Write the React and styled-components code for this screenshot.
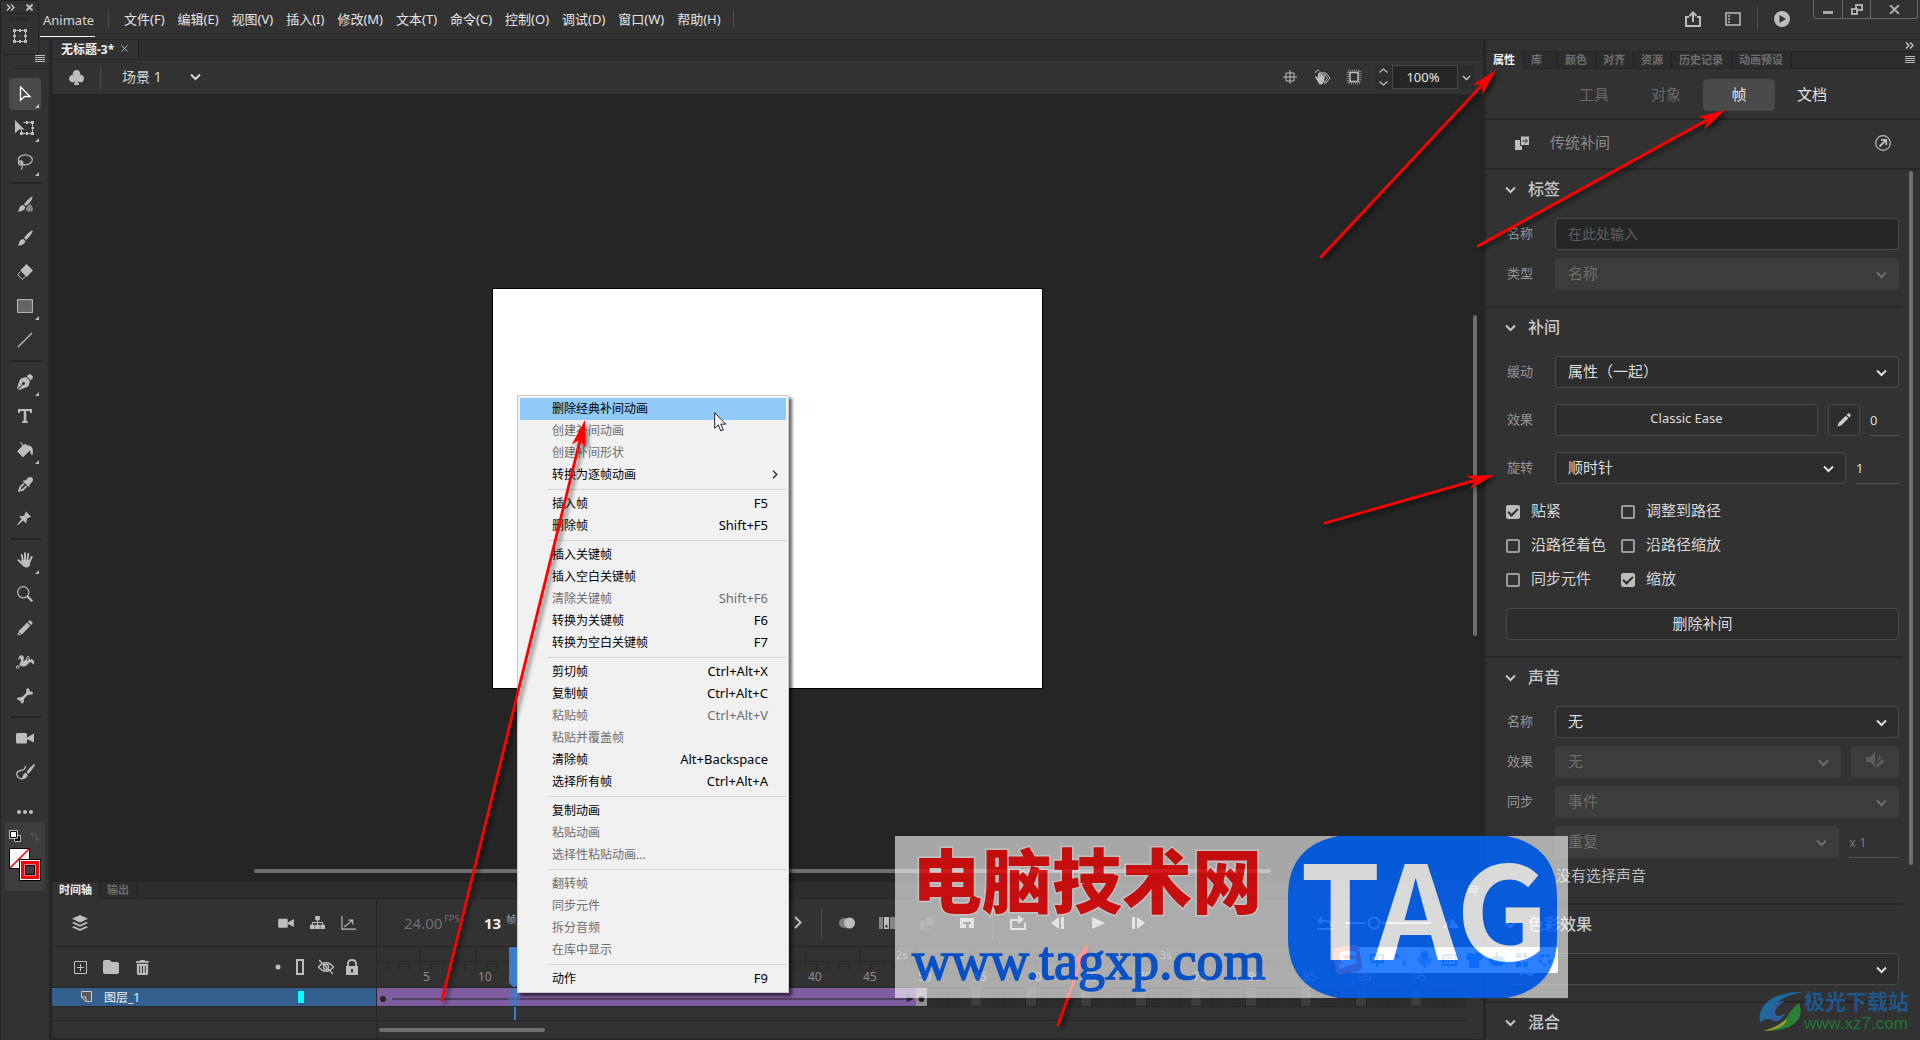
import React from "react"
import styled, { createGlobalStyle, css } from "styled-components"
import { FaPenNib, FaBone, FaEyeDropper, FaFolder, FaTrashCan } from "react-icons/fa6"
import { BsSuitClubFill } from "react-icons/bs"

/*-----------STYLES ------------*/

const GlobalStyle = createGlobalStyle`
  * {
    box-sizing: border-box;
  }
  body {
    margin: 0;
    background: #262626;
    color: #d6d6d6;
    font-family: "Noto Sans", "Noto Sans CJK SC", sans-serif;
    font-size: 12px;
    overflow: hidden;
  }
  button, input, select {
    font-family: inherit;
    font-size: inherit;
    color: inherit;
    margin: 0;
    padding: 0;
    border: 0;
    background: none;
  }
  svg {
    display: block;
  }
`

const Page = styled.div`
  position: relative;
  display: grid;
  grid-template-columns: 52px minmax(0, 1fr) 434px;
  grid-template-rows: 40px minmax(0, 1fr);
  column-gap: 0;
  height: 100vh;
  background: #262626;
`

const TitleBar = styled.header`
  grid-column: 1 / -1;
  display: flex;
  align-items: flex-start;
  background: #323232;
  border-bottom: 1px solid #262626;
`

const AppName = styled.div`
  margin-left: 40px;
  width: 55px;
  height: 37px;
  padding-left: 3px;
  line-height: 40px;
  font-size: 13px;
  border-bottom: 1px solid #fff;
`

const Divider = styled.div`
  flex-shrink: 0;
  width: 1px;
  height: ${props => props.$tall || 20}px;
  margin: ${props => props.$margin || "0"};
  background: #4c4c4c;
`

const MenuBar = styled.nav`
  display: flex;
  gap: 13px;
  margin: 0 12px 0 15px;
`

const MenuButton = styled.button`
  height: 36px;
  font-size: 13px;
  color: #e6e6e6;
  white-space: nowrap;
`

const IconButton = styled.button`
  display: grid;
  place-items: center;
  flex-shrink: 0;
  width: ${props => props.$w || 16}px;
  height: ${props => props.$h || 16}px;
  color: ${props => props.$color || "#bdbdbd"};
`

const TitleTools = styled.div`
  display: flex;
  align-items: center;
  gap: 16px;
  height: 38px;
  margin-left: auto;
`

const WindowButtons = styled.div`
  display: grid;
  grid-template-columns: 28px 28px 47px;
  height: 19px;
  margin: 0 2px 0 23px;
  border: 1px solid #686868;
  border-top: 0;
  border-radius: 0 0 3px 3px;

  button {
    height: 18px;
    width: auto;
  }
  button + button {
    border-left: 1px solid #686868;
  }
`

const Floating = styled.div`
  position: absolute;
  left: 0;
  top: 0;
  width: 39px;
  height: 55px;
  background: #323232;
  border: 1px solid #222;
  border-radius: 3px;
`

const FloatingHead = styled.div`
  display: flex;
  justify-content: space-between;
  align-items: center;
  height: 13px;
  padding: 0 5px;
  border-bottom: 1px solid #262626;
`

const Gripper = styled.div`
  width: 20px;
  height: 4px;
  margin: 3px auto 7px;
  background: repeating-linear-gradient(90deg, #232323 0 1px, transparent 1px 2px);
`

const FloatingBody = styled.div`
  display: grid;
  justify-items: center;
`

const Toolbar = styled.aside`
  display: flex;
  flex-direction: column;
  align-items: center;
  border-right: 3px solid #262626;
  background: #323232;
  border-left: 1px solid #262626;
`

const ToolbarHead = styled.div`
  align-self: stretch;
  display: flex;
  justify-content: flex-end;
  align-items: center;
  height: 29px;
  padding: 9px 4px 0 0;
  border-bottom: 1px solid #262626;
  margin: 0 0 9px 10px;
`

const ToolGroup = styled.div`
  display: flex;
  flex-direction: column;
  gap: 2px;
`

const ToolButton = styled.button`
  position: relative;
  display: grid;
  place-items: center;
  width: 32px;
  height: 32px;
  color: #bdbdbd;
  border-radius: 4px;
  background: ${props => (props.$active ? "#4a4a4a" : "none")};

  ${props =>
    props.$more &&
    css`
      &::after {
        content: "";
        position: absolute;
        right: 2px;
        bottom: 2px;
        border: 2px solid transparent;
        border-right-color: #bdbdbd;
        border-bottom-color: #bdbdbd;
      }
    `}
`

const ToolLine = styled.div`
  width: 31px;
  height: 2px;
  margin: 4px 0;
  background: #252525;
`

const SwatchBox = styled.div`
  width: 40px;
  height: 69px;
  margin-top: 2px;
  padding: 8px 4px;
  border-radius: 4px;
  background: #3d3d3d;
`

const Center = styled.main`
  display: flex;
  flex-direction: column;
  min-width: 0;
  border-right: 3px solid #262626;
`

const DocTabs = styled.div`
  display: flex;
  height: 20px;
  background: #2d2d2d;
  border-bottom: 1px solid #262626;
`

const DocTab = styled.button`
  display: flex;
  align-items: center;
  gap: 7px;
  padding: 0 10px 2px 9px;
  font-weight: 700;
  color: #f0f0f0;
  background: #323232;
  border-right: 1px solid #222;
`

const SceneBar = styled.div`
  display: flex;
  align-items: center;
  height: 34px;
  padding: 0 8px 0 16px;
  background: #323232;
`

const SceneName = styled.button`
  display: flex;
  align-items: center;
  gap: 28px;
  padding-bottom: 2px;
  font-size: 14px;
`

const SceneTools = styled.div`
  display: flex;
  align-items: center;
  gap: 16px;
  margin-left: auto;
`

const ZoomBox = styled.label`
  display: grid;
  grid-template-columns: 17px 66px 17px;
  align-items: center;
  justify-items: center;
  height: 24px;
  margin-left: -3px;
  border-radius: 3px;
  background: #2d2d2d;

  input {
    width: 66px;
    height: 24px;
    padding-right: 4px;
    text-align: center;
    font-size: 13px;
    color: #e6e6e6;
    background: #252525;
    border: 1px solid #4a4a4a;
  }
`

const Canvas = styled.section`
  position: relative;
  flex: 1;
  display: grid;
  place-items: center;
  background: #252525;
`

const Stage = styled.div`
  width: 549px;
  height: 399px;
  background: #fff;
  outline: 1px solid #000;
`

const ScrollThumb = styled.div`
  position: absolute;
  border-radius: 2px;
  background: #6e6e6e;
`

const StageScrollX = styled(ScrollThumb)`
  left: 202px;
  right: 212px;
  bottom: 9px;
  height: 4px;
`

const StageScrollY = styled(ScrollThumb)`
  right: 6px;
  top: 221px;
  width: 4px;
  height: 321px;
`

const TabStrip = styled.div`
  display: flex;
  height: 17px;
  padding-right: 5px;
  background: #2d2d2d;
`

const Tab = styled.button`
  padding: 0 7px;
  font-size: 11px;
  font-weight: 600;
  line-height: 14px;
  color: ${props => (props.$active ? "#f2f2f2" : "#6e6e6e")};
  background: ${props => (props.$active ? "#323232" : "none")};
  border-right: 1px solid #222;
  border-bottom: 1px solid ${props => (props.$active ? "#323232" : "#262626")};
`

const TabRest = styled.div`
  flex: 1;
  display: flex;
  justify-content: flex-end;
  align-items: center;
  border-bottom: 1px solid #262626;
`

const Timeline = styled.section`
  display: grid;
  grid-template-columns: 325px minmax(0, 1fr) 17px;
  grid-template-rows: 48px 41px 19px 14px 18px;
  background: #323232;
  border-bottom: 1px solid #262626;
`

const Cell = styled.div`
  display: flex;
  align-items: center;
  gap: ${props => props.$gap || 0}px;
  padding: ${props => props.$pad || "0"};
  border-bottom: 1px solid #262626;
`

const LeftCell = styled(Cell)`
  grid-column: 1;
  border-right: 1px solid #262626;
  background: ${props => (props.$selected ? "#34608f" : "none")};
`

const RightCell = styled(Cell)`
  grid-column: 2;
  position: relative;
  overflow: hidden;
`

const Push = styled.div`
  flex: 1;
`

const LayerName = styled.span`
  flex: 1;
  margin-left: 12px;
  color: #f0f0f0;
`

const LayerColor = styled.span`
  width: 6px;
  height: 12px;
  background: #0ff;
`

const Fps = styled.div`
  display: flex;
  flex-shrink: 0;
  align-items: flex-start;
  gap: 2px;
  width: 80px;
  font-size: 15px;
  line-height: 20px;
  color: #707070;

  sup {
    font-size: 9px;
    line-height: 12px;
  }
`

const FrameNo = styled(Fps)`
  gap: 5px;
  color: #f0f0f0;
  font-weight: 700;

  sup {
    font-size: 10px;
    font-weight: 400;
    color: #a0a0a0;
  }
`

const PlayButtons = styled.div`
  display: flex;
  flex-shrink: 0;
  align-items: center;
  gap: 24px;
  margin-left: 230px;
`

const SizeSlider = styled.div`
  display: flex;
  flex-shrink: 0;
  align-items: center;
  gap: 12px;
  margin-left: 171px;
`

const Ruler = styled(RightCell)`
  display: block;
  background-image: linear-gradient(#262626, #262626),
    repeating-linear-gradient(90deg, transparent 0 54px, #262626 54px 55px),
    repeating-linear-gradient(90deg, transparent 0 10px, #262626 10px 11px);
  background-size: 100% 1px, 120% 14px, 100% 8px;
  background-position: 0 14px, -11px 0, 0 15px;
  background-repeat: no-repeat;
`

const Seconds = styled.div`
  display: flex;
  height: 15px;
  margin-left: 253px;

  span {
    flex: 0 0 264px;
    padding-left: 2px;
    font-size: 11px;
    line-height: 16px;
    color: #8a8a8a;
  }
`

const Numbers = styled.div`
  display: flex;
  margin-left: 44px;

  span {
    flex: 0 0 55px;
    padding-left: 2px;
    font-size: 12px;
    line-height: 30px;
    color: #8f8f8f;
  }
`

const Playhead = styled.div`
  position: absolute;
  left: 132px;
  top: 0;
  width: 11px;
  height: 40px;
  background: #3b7dca;
  clip-path: polygon(0 0, 100% 0, 100% 90%, 60% 100%, 40% 100%, 0 90%);
`

const PlayheadTrail = styled.div`
  position: absolute;
  left: 132px;
  top: 0;
  bottom: 0;
  width: 11px;
  background: linear-gradient(90deg, transparent 5px, #3b7dca 5px 7px, transparent 7px),
    ${props => (props.$soft ? "rgba(59, 125, 202, 0.5)" : "none")};
`

const Frames = styled(RightCell)`
  background-image: repeating-linear-gradient(90deg, transparent 0 10px, #262626 10px 11px),
    repeating-linear-gradient(90deg, #2d2d2d 0 44px, #3c3c3c 44px 55px);
`

const Tween = styled.div`
  width: 539px;
  height: 18px;
  background: #7f5ca0;
`

const LastFrame = styled.div`
  width: 11px;
  height: 18px;
  background: #8f8f8f;
`

const TimeScroll = styled.div`
  width: 166px;
  height: 4px;
  margin-left: 2px;
  border-radius: 2px;
  background: #6e6e6e;
`

const Gutter = styled.div`
  grid-column: 3;
  grid-row: 1 / -1;
  background: #323232;
`

const Panel = styled.aside`
  display: flex;
  flex-direction: column;
  min-height: 0;
  background: #323232;
`

const PanelTop = styled.div`
  display: flex;
  justify-content: flex-end;
  align-items: center;
  height: 12px;
  padding-right: 6px;
  border-bottom: 1px solid #262626;
`

const PanelTab = styled(Tab)`
  text-align: left;
  min-width: ${props => props.$min || 37}px;
  padding: 0 8px 0 7px;
  line-height: 16px;
`

const Segments = styled.div`
  display: flex;
  align-items: center;
  gap: 22px;
  height: 51px;
  padding: 2px 0 0 93px;
  border-bottom: 2px solid #262626;
`

const Segment = styled.button`
  height: 32px;
  min-width: ${props => (props.$active ? 72 : 30)}px;
  padding-bottom: 2px;
  font-size: 15px;
  color: ${props => (props.$off ? "#6a6a6a" : "#e4e4e4")};
  border-radius: 4px;
  background: ${props => (props.$active ? "#4a4a4a" : "none")};
  margin-left: ${props => (props.$gapLeft || 0)}px;
`

const TweenHead = styled.div`
  display: flex;
  align-items: center;
  height: 50px;
  padding: 0 29px 2px 28px;
  font-size: 15px;
  line-height: 20px;
  color: #8a8a8a;
  border-bottom: 2px solid #262626;

  span {
    flex: 1;
    margin-left: 20px;
    padding-bottom: 2px;
  }
`

const PanelBody = styled.div`
  position: relative;
  flex: 1;
  min-height: 0;
  overflow: hidden;
  padding-right: 17px;
`

const PanelScroll = styled(ScrollThumb)`
  right: 7px;
  top: 1px;
  width: 4px;
  height: 694px;
`

const Section = styled.section`
  display: flex;
  flex-direction: column;
  gap: ${props => props.$gap || 8}px;
  padding: 48px 4px 16px 20px;
  border-bottom: 2px solid #262626;
`

const SectionTitle = styled.h2`
  display: flex;
  align-items: center;
  gap: 12px;
  height: 40px;
  margin: ${props => (props.$loose ? "-48px 0 -8px -1px" : "-48px 0 0 -1px")};
  padding-bottom: 4px;
  font-size: 16px;
  font-weight: 500;
  color: #c8c8c8;

  svg {
    margin-top: 3px;
  }
`

const Row = styled.div`
  display: grid;
  grid-template-columns: 49px minmax(0, 1fr) ${props => props.$end || ""};
  align-items: center;
  height: 32px;
`

const Label = styled.label`
  padding: 0 0 4px 1px;
  font-size: 13px;
  color: #959595;
`

const field = css`
  width: 100%;
  height: 32px;
  padding: 0 12px 2px;
  font-size: 15px;
  color: #dedede;
  background: #2d2d2d;
  border: 1px solid #4a4a4a;
  border-radius: 4px;
`

const TextInput = styled.input`
  ${field}
  background: #262626;

  &::placeholder {
    color: #5e5e5e;
    opacity: 1;
    font-size: 14px;
  }
`

const SelectWrap = styled.div`
  display: grid;
  align-items: center;
  color: ${props => (props.$off ? "#6e6e6e" : "#e0e0e0")};

  > * {
    grid-area: 1 / 1;
  }
  svg {
    justify-self: end;
    margin-right: 12px;
    pointer-events: none;
  }
`

const Select = styled.select`
  ${field}
  appearance: none;
  opacity: 1;

  &:disabled {
    color: #6e6e6e;
    background: #3c3c3c;
    border-color: #3c3c3c;
  }
`

const FieldButton = styled.button`
  ${field}
  display: grid;
  place-items: center;
  padding-bottom: 4px;
  font-size: ${props => props.$size || 15}px;

  &:disabled {
    color: #555;
    background: #3c3c3c;
    border-color: #3c3c3c;
  }
`

const PencilButton = styled.button`
  ${field}
  display: grid;
  place-items: center;
  padding: 0;
`

const EndTools = styled.div`
  display: grid;
  grid-template-columns: ${props => props.$cols};
  gap: 10px;
  padding-left: 10px;
`

const NumberInput = styled.input`
  width: 100%;
  height: 32px;
  font-size: 13px;
  color: ${props => (props.disabled ? "#777" : "#dedede")};
  border-bottom: 1px solid #555;
`

const Checks = styled.div`
  display: grid;
  grid-template-columns: 115px 1fr;
  row-gap: 10px;
`

const Check = styled.label`
  display: flex;
  align-items: center;
  gap: 11px;
  height: 24px;
  font-size: 15px;
  line-height: 20px;
  color: #d6d6d6;
  white-space: nowrap;

  span {
    padding-bottom: 4px;
  }
  input {
    display: grid;
    place-items: center;
    appearance: none;
    width: 14px;
    height: 14px;
    border: 2px solid #9a9a9a;
    border-radius: 2px;
  }
  input:checked {
    background: #bdbdbd;
    border-color: #bdbdbd;
  }
  input:checked::after {
    content: "";
    width: 4px;
    height: 8px;
    margin-top: -2px;
    border: solid #2d2d2d;
    border-width: 0 2px 2px 0;
    transform: rotate(45deg);
  }
`

const Hint = styled.p`
  height: 21px;
  margin: 0 0 0 50px;
  font-size: 15px;
  line-height: 18px;
  color: #bdbdbd;
`

const ContextMenu = styled.ul`
  position: absolute;
  left: 517px;
  top: 395px;
  width: 272px;
  margin: 0;
  padding: 2px;
  list-style: none;
  color: #000;
  background: #f1f1f1;
  border: 1px solid #ccc;
  box-shadow: 3px 3px 3px rgba(0, 0, 0, 0.6);
`

const ContextButton = styled.button`
  display: flex;
  justify-content: space-between;
  align-items: center;
  width: 100%;
  height: 22px;
  padding: 0 18px 2px 32px;
  color: ${props => (props.disabled ? "#6d6d6d" : "#000")};
  background: ${props => (props.$hot ? "#91c9f7" : "none")};

  kbd {
    font-family: inherit;
    font-size: 13px;
  }
  svg {
    margin-right: -10px;
  }
`

const ContextLine = styled.li`
  height: 1px;
  margin: 3px 0 3px 28px;
  background: #d2d2d2;
`

const Annotations = styled.svg`
  position: absolute;
  left: 0;
  top: 0;
  width: 100%;
  height: 100%;
  overflow: visible;
  pointer-events: none;
  filter: drop-shadow(3px 3px 2px rgba(0, 0, 0, 0.55));
`

const Cursor = styled.svg`
  position: absolute;
  left: 714px;
  top: 412px;
`

const InputBar = styled.div`
  position: absolute;
  left: 1346px;
  top: 947px;
  width: 212px;
  height: 26px;
  background: #fff;
  border-radius: 2px;

  svg {
    margin-left: -6px;
    overflow: visible;
  }
`

const TagMark = styled.div`
  position: absolute;
  left: 895px;
  top: 836px;
  width: 673px;
  height: 162px;
  background: rgba(255, 255, 255, 0.73);
  opacity: 0.82;
`

const TagSvg = styled.svg`
  width: 673px;
  height: 162px;
  overflow: visible;
`

const SiteMark = styled.div`
  position: absolute;
  right: 11px;
  bottom: 6px;
  display: flex;
  align-items: center;
  gap: 1px;
`

const SiteText = styled.div`
  font-family: "Liberation Sans", "Noto Sans CJK SC", sans-serif;
  font-size: 21px;
  font-weight: 700;
  line-height: 24px;
  color: #20578b;

  a {
    display: block;
    font-size: 17px;
    font-weight: 400;
    line-height: 20px;
    color: #1d7537;
    text-decoration: none;
  }
`

/*-----------END STYLES ------------*/

const menus = ["文件(F)", "编辑(E)", "视图(V)", "插入(I)", "修改(M)", "文本(T)", "命令(C)", "控制(O)", "调试(D)", "窗口(W)", "帮助(H)"]

const contextItems = [
  { text: "删除经典补间动画", hot: true },
  { text: "创建补间动画", off: true },
  { text: "创建补间形状", off: true },
  { text: "转换为逐帧动画", sub: true },
  null,
  { text: "插入帧", key: "F5" },
  { text: "删除帧", key: "Shift+F5" },
  null,
  { text: "插入关键帧" },
  { text: "插入空白关键帧" },
  { text: "清除关键帧", key: "Shift+F6", off: true },
  { text: "转换为关键帧", key: "F6" },
  { text: "转换为空白关键帧", key: "F7" },
  null,
  { text: "剪切帧", key: "Ctrl+Alt+X" },
  { text: "复制帧", key: "Ctrl+Alt+C" },
  { text: "粘贴帧", key: "Ctrl+Alt+V", off: true },
  { text: "粘贴并覆盖帧", off: true },
  { text: "清除帧", key: "Alt+Backspace" },
  { text: "选择所有帧", key: "Ctrl+Alt+A" },
  null,
  { text: "复制动画" },
  { text: "粘贴动画", off: true },
  { text: "选择性粘贴动画...", off: true },
  null,
  { text: "翻转帧", off: true },
  { text: "同步元件", off: true },
  { text: "拆分音频", off: true },
  { text: "在库中显示", off: true },
  null,
  { text: "动作", key: "F9" },
]

const checks = [
  ["贴紧", true],
  ["调整到路径", false],
  ["沿路径着色", false],
  ["沿路径缩放", false],
  ["同步元件", false],
  ["缩放", true],
]

const arrows = [
  [1321, 257, 1496, 70],
  [1478, 246, 1725, 110],
  [1325, 523, 1494, 475],
  [442, 1000, 585, 420],
  [1058, 1025, 1088, 942],
]

function Icon({ size = 16, line, children }) {
  return (
    <svg width={size} height={size} viewBox="0 0 16 16" fill={line ? "none" : "currentColor"} stroke={line ? "currentColor" : "none"} strokeWidth={line || 1}>
      {children}
    </svg>
  )
}

function Chevron({ size = 11, width = 2 }) {
  return (
    <svg width={size} height={size} viewBox="0 0 11 11" fill="none" stroke="currentColor" strokeWidth={width}>
      <path d="M1 3.5 5.5 8 10 3.5" />
    </svg>
  )
}

const Burger = () => (
  <svg width="10" height="8" stroke="#bdbdbd">
    <path d="M0 .5h10M0 2.5h10M0 4.5h10M0 6.5h10" />
  </svg>
)

const DoubleArrow = () => (
  <svg width="9" height="7" fill="none" stroke="#d0d0d0" strokeWidth="1.2">
    <path d="M1 .5 4 3.5 1 6.5M5 .5 8 3.5 5 6.5" />
  </svg>
)

const FrameIcon = () => (
  <Icon>
    <path fillRule="evenodd" d="M2 2h12v12H2zM3 3v10h10V3z" />
    <path d="M1 1h3v3H1zM12 1h3v3h-3zM1 12h3v3H1zM12 12h3v3h-3zM7 1h2v3H7zM7 12h2v3H7zM1 7h3v2H1zM12 7h3v2h-3zM7.5 7.5h1v1h-1z" />
  </Icon>
)

const CameraIcon = ({ size = 16 }) => (
  <svg width={size + 2} height={size} viewBox="0 0 18 16" fill="currentColor">
    <rect x="0" y="3" width="11" height="10.500" rx="1.500" />
    <path d="M11 7.500 18 3.500v9L11 9z" />
  </svg>
)

const PencilIcon = () => (
  <Icon>
    <path fillRule="evenodd" d="M10.200 2.600 13.400 5.800 5.300 14 .4 15.600 2 10.800zM2.600 12.300l-.7 1.900 1.900-.7z" />
    <path d="M11 1.800 12.400.5q.6-.4 1.100.1l1.900 1.900q.5.500.1 1.100L14.200 5z" />
  </Icon>
)

const BrushIcon = () => (
  <Icon>
    <path d="M14.500.5q1.500-.3 1.200 1.100Q13 7 9.200 10L7 8Q10 3.500 14.500.5zM6.300 8.900l2 2q-.2 4.300-8 4.700 2-1 2-3.500 1-3 4-3.200z" />
  </Icon>
)

// open palm with the fingers spread, five rounded strokes over a filled palm
const PalmIcon = () => (
  <svg width="17" height="16" viewBox="0 0 17 16" fill="currentColor" stroke="currentColor" strokeLinecap="round">
    <path stroke="none" d="M4.500 8h8.800q.5 7.500-3.800 7.500-3 0-5-3.500z" />
    <path strokeWidth="1.900" d="M6 9 4.700 3M8 8V1.300M10.300 8.500 11.300 2M12.500 9.500 14.800 4.800M5.500 12 1.500 8.200" />
  </svg>
)

// long bone lying from the lower left to the upper right
const Bone = styled(FaBone)`
  transform: rotate(-8deg);
`

const toolGroups = [
  {
    tools: [
      { name: "选择工具", active: true, more: true, icon: <Icon line="1.300"><path stroke="#fff" d="M3.500.8v13.400L7.500 10.500H13z" /></Icon> },
      { name: "任意变形工具", more: true, icon: <svg width="20" height="16" viewBox="0 0 20 16"><path fill="currentColor" d="M0 0v13.500l4-4h5.500z" /><path fill="none" stroke="currentColor" d="M8.500 2.500h9v11h-11V10" /><path fill="currentColor" d="M16 1h3v3h-3zM16 12h3v3h-3zM5 12h3v3H5zM11 1h2v3h-2zM11 12h2v3h-2zM16.500 7H19v2h-2.500z" /></svg> },
      { name: "套索工具", more: true, icon: <Icon line="1.200"><ellipse cx="8.300" cy="5.800" rx="7" ry="5" /><circle cx="3.600" cy="9" r="2.200" /><path d="M3.600 7Q7 13 4 15.500" /></Icon> },
    ],
  },
  {
    tools: [
      { name: "流畅画笔工具", icon: <Icon><path d="M15.500 0Q16 4 9 10L7 8.200Q10 4 15.500 0zM6.300 9l2 2q-.2 4.300-8 4.700 2-1 2-3.500 1-3 4-3.200z" /><path opacity=".6" d="M13 7.500q3 4 3 5.500 0 2.700-3.500 2.700T9 13q0-1.500 4-5.500z" /></Icon> },
      { name: "画笔工具", icon: <BrushIcon /> },
      { name: "橡皮擦工具", icon: <Icon><path d="M9.500 0 16 6.500 9.500 13 3.200 6.600z" /><path fill="none" stroke="currentColor" d="M3 8 .8 10.800 5.200 15.300 8.500 12.500" /></Icon> },
      { name: "矩形工具", more: true, icon: <Icon><rect x=".6" y="1.600" width="14.800" height="12.800" fill="#646464" stroke="currentColor" /></Icon> },
      { name: "线条工具", icon: <Icon line="1.300"><path d="M1 15 15 1" /></Icon> },
    ],
  },
  {
    tools: [
      { name: "钢笔工具", more: true, icon: <FaPenNib size={16} /> },
      { name: "文本工具", icon: <Icon><path d="M1 1h14v4h-1.500q-.3-2-2-2H9.300v9.500q0 .8 1.700 1V15H5v-1.500q1.700-.2 1.700-1V3H4.500q-1.700 0-2 2H1z" /></Icon> },
      { name: "颜料桶工具", more: true, icon: <Icon><path d="M.3 9.200 5.500 4 4 1.500 3 .5l.8-.8L6.500 3l1.500-1q2 0 2 2l5 4.500-7 .5-2.300 6z" /><path d="M.3 9.200 6 3.500 12.500 9 6 15.300z" /><path d="M7 3.500Q14 2 15.500 6.500q.8 3 .2 6-1.500.8-2-.5.2-3.500-2-4z" /></Icon> },
      { name: "滴管工具", icon: <FaEyeDropper size={15} /> },
      { name: "资源变形工具", icon: <Icon><path d="M9 1.500 14 6.700 10 8.500l-.8 5L6.300 10.500 1 15l-.7-.5L4.600 9 2 6.300 7.200 5.800z" /></Icon> },
    ],
  },
  {
    tools: [
      { name: "手形工具", more: true, icon: <PalmIcon /> },
      { name: "缩放工具", icon: <Icon line="1.200"><circle cx="6.300" cy="6.300" r="5.600" /><path strokeWidth="2.200" d="M10.300 10.300 15.300 15.300" /></Icon> },
      { name: "铅笔工具", icon: <PencilIcon /> },
      { name: "宽度工具", icon: <svg width="18" height="14" viewBox="0 0 18 14"><path fill="currentColor" d="M2 5Q3-1 6.500.5q1.500 1 1.500 3l-1 3.500 3-2.500q1.500-1 1 1.500 3-3 5.500-1.500T18 9l-1 .5Q15.500 6 13 8q-3 4-6 3.500-2.500 0-3.500-2.500Q6 6 4 3z" /><path fill="none" stroke="currentColor" d="M1.500 12.500 12 3" /><circle cx="1.700" cy="12" r="1.300" fill="#323232" stroke="currentColor" /><circle cx="12" cy="2.800" r="1.300" fill="#323232" stroke="currentColor" /></svg> },
      { name: "骨骼工具", icon: <Icon><path d="M5.300 8.800 9 5.200Q9.300 3 9.300 1.500q1-1.800 2.700-.8l.8 2.500 2.400.6q1.600 1.500-.2 2.800l-4.300.3-3.600 3.800q-.3 2-.5 3.800-1.300 1.800-2.600.6l-.6-2.300-2.400-.8Q-.6 10.500 1 9.500z" /></Icon> },
    ],
  },
  {
    tools: [
      { name: "摄像头", icon: <CameraIcon /> },
      { name: "绘画工具", icon: <svg width="19" height="16" viewBox="0 0 19 16"><path fill="currentColor" d="M18 0q1.200 0 .8 1.200Q15 7.500 12.300 9.700L10.500 8Q13 4 18 0zM9.700 8.700l2 2q-.2 4-6.700 4.700 1.500-1 1.700-3.500 1-3 3-3.200z" /><path fill="none" stroke="currentColor" strokeWidth="1.300" d="M9.500 2Q9.500 6 5 6.500T.8 10.500Q1 14 6 15" /></svg> },
    ],
  },
]

function Toolbox() {
  return (
    <Toolbar>
      <ToolbarHead>
        <Burger />
      </ToolbarHead>
      {toolGroups.map((group, i) => (
        <React.Fragment key={i}>
          {i > 0 && <ToolLine />}
          <ToolGroup>
            {group.tools.map(tool => (
              <ToolButton key={tool.name} aria-label={tool.name} $active={tool.active} $more={tool.more}>
                {tool.icon}
              </ToolButton>
            ))}
          </ToolGroup>
        </React.Fragment>
      ))}
      <ToolButton aria-label="编辑工具栏">
        <svg width="16" height="28" fill="currentColor">
          <circle cx="2" cy="22" r="2" />
          <circle cx="8" cy="22" r="2" />
          <circle cx="14" cy="22" r="2" />
        </svg>
      </ToolButton>
      <SwatchBox>
        <svg width="32" height="52">
          <path d="M5.500 5.500h6v6h-6z" fill="#000" stroke="#bbb" />
          <path d="M1.500 1.500h6v6h-6z" fill="#fff" stroke="#000" />
          <path d="M.5.500h8v8h-8z" fill="none" stroke="#bbb" />
          <path d="M21 4h5q2 0 2 6" fill="none" stroke="#505050" strokeWidth="2" />
          <path d="M20 4l4-3v6zM28 12l-3-4h6z" fill="#505050" />
          <path d="M.5 18.500h20v20H.5z" fill="#fff" stroke="#000" />
          <path d="M1 38 20 19" stroke="#f00" strokeWidth="1.600" />
          <path d="M10.500 29.500h21v21h-21z" fill="#fff" stroke="#000" />
          <path d="M12 31h18v18H12z" fill="#f00" />
          <path d="M15.500 34.500h11v11h-11z" fill="#fff" />
          <path d="M16.500 35.500h9v9h-9z" fill="#3d3d3d" stroke="#000" />
        </svg>
      </SwatchBox>
    </Toolbar>
  )
}

function Dropdown({ id, label, value, off }) {
  return (
    <SelectWrap $off={off}>
      <Select id={id} aria-label={label} disabled={off} defaultValue={value}>
        <option>{value}</option>
      </Select>
      <Chevron />
    </SelectWrap>
  )
}

function Title({ children, loose }) {
  return (
    <SectionTitle $loose={loose}>
      <Chevron />
      {children}
    </SectionTitle>
  )
}

function Properties() {
  return (
    <Panel>
      <PanelTop>
        <DoubleArrow />
      </PanelTop>
      <TabStrip>
        <PanelTab $active>属性</PanelTab>
        <PanelTab $min={34}>库</PanelTab>
        {["颜色", "对齐", "资源", "历史记录", "动画预设"].map(name => (
          <PanelTab key={name}>{name}</PanelTab>
        ))}
        <TabRest>
          <Burger />
        </TabRest>
      </TabStrip>
      <Segments>
        <Segment $off>工具</Segment>
        <Segment $off $gapLeft={20}>对象</Segment>
        <Segment $active>帧</Segment>
        <Segment>文档</Segment>
      </Segments>
      <TweenHead>
        <IconButton as="div">
          <Icon>
            <path fill="#bdbdbd" d="M1 5h7v10H1z" />
            <path fill="#bdbdbd" stroke="#323232" d="M6.500 1h9v9.500h-9z" />
            <path fill="none" stroke="#323232" d="M8 6h5M11 3.500 13.500 6 11 8.500" />
          </Icon>
        </IconButton>
        <span>传统补间</span>
        <IconButton aria-label="转换">
          <Icon line="1.200">
            <circle cx="8" cy="8" r="7.300" />
            <path strokeWidth="1.800" d="M4.500 11.500 11 5M6 4.800h5.200V10" />
          </Icon>
        </IconButton>
      </TweenHead>
      <PanelBody>
        <PanelScroll />
        <Section>
          <Title>标签</Title>
          <Row>
            <Label htmlFor="label-name">名称</Label>
            <TextInput id="label-name" placeholder="在此处输入" />
          </Row>
          <Row>
            <Label htmlFor="label-type">类型</Label>
            <Dropdown id="label-type" value="名称" off />
          </Row>
        </Section>
        <Section $gap={16}>
          <Title loose>补间</Title>
          <Row>
            <Label htmlFor="ease">缓动</Label>
            <Dropdown id="ease" value="属性（一起）" />
          </Row>
          <Row $end="81px">
            <Label htmlFor="effect">效果</Label>
            <FieldButton id="effect" $size={13}>Classic Ease</FieldButton>
            <EndTools $cols="32px 29px">
              <PencilButton aria-label="编辑缓动">
                <svg width="14" height="14" viewBox="0 0 16 16" fill="#cfcfcf">
                  <path d="M2 11 10 3l3 3-8 8-4.500 1.500zM11 2l1.500-1.500q.8-.5 1.500 0l1.500 1.500q.5.800 0 1.500L14 5z" />
                </svg>
              </PencilButton>
              <NumberInput aria-label="缓动强度" defaultValue="0" />
            </EndTools>
          </Row>
          <Row $end="53px">
            <Label htmlFor="rotate">旋转</Label>
            <Dropdown id="rotate" value="顺时针" />
            <EndTools $cols="43px">
              <NumberInput aria-label="旋转次数" defaultValue="1" />
            </EndTools>
          </Row>
          <Checks>
            {checks.map(([name, on]) => (
              <Check key={name}>
                <input type="checkbox" defaultChecked={on} />
                <span>{name}</span>
              </Check>
            ))}
          </Checks>
          <FieldButton>删除补间</FieldButton>
        </Section>
        <Section>
          <Title>声音</Title>
          <Row>
            <Label htmlFor="sound-name">名称</Label>
            <Dropdown id="sound-name" value="无" />
          </Row>
          <Row $end="58px">
            <Label htmlFor="sound-effect">效果</Label>
            <Dropdown id="sound-effect" value="无" off />
            <EndTools $cols="48px">
              <FieldButton disabled aria-label="编辑声音封套">
                <svg width="19" height="16" viewBox="0 0 19 16" fill="#5c5c5c">
                  <path d="M0 5h4l5-5v15l-5-5H0zM11 4q2 3 0 7l1.500-2 1-3zM13 2q2 2 2 4l-1.500 2zM16 7l2.500 2.500-6 5.500-3 1 1-3z" />
                </svg>
              </FieldButton>
            </EndTools>
          </Row>
          <Row>
            <Label htmlFor="sound-sync">同步</Label>
            <Dropdown id="sound-sync" value="事件" off />
          </Row>
          <Row $end="60px">
            <span />
            <Dropdown label="重复" value="重复" off />
            <EndTools $cols="50px">
              <NumberInput aria-label="重复次数" defaultValue="x 1" disabled />
            </EndTools>
          </Row>
          <Hint>没有选择声音</Hint>
        </Section>
        <Section>
          <Title>色彩效果</Title>
          <Dropdown label="色彩效果" value="无" />
        </Section>
        <Section>
          <Title>混合</Title>
        </Section>
      </PanelBody>
    </Panel>
  )
}

function TimelinePanel() {
  const numbers = Array.from({ length: 19 }, (_, i) => (i + 1) * 5)
  return (
    <>
      <TabStrip>
        <Tab $active>时间轴</Tab>
        <Tab>输出</Tab>
        <TabRest>
          <Burger />
        </TabRest>
      </TabStrip>
      <Timeline>
        <LeftCell $pad="2px 20px" $gap={15}>
          <IconButton aria-label="图层">
            <Icon>
              <path d="M8 0l8 3.700-8 3.700-8-3.700zM2 7l6 2.700L14 7l2 1-8 3.700L0 8zM2 11.200l6 2.700 6-2.700 2 1L8 16l-8-3.800z" />
            </Icon>
          </IconButton>
          <Push />
          <IconButton aria-label="添加摄像头"><CameraIcon size={14} /></IconButton>
          <IconButton aria-label="父级视图">
            <Icon size={15}>
              <path d="M5.500 1h5v4.500h-5zM0 10.500h5V15H0zM5.500 10.500h5V15h-5zM11 10.500h5V15h-5zM7.500 5h1v6h-1zM2 7.500h12v1H2zM2 8h1v3H2zM13 8h1v3h-1z" />
            </Icon>
          </IconButton>
          <IconButton aria-label="图层深度">
            <Icon line="1.200" size={15}>
              <path d="M1 1v14h15M3.500 12.500 12 6M8 5.500h4.500V10" />
            </Icon>
          </IconButton>
        </LeftCell>
        <RightCell $pad="0 0 0 27px">
          <Fps>24.00<sup>FPS</sup></Fps>
          <FrameNo>13<sup>帧</sup></FrameNo>
          <PlayButtons>
            <IconButton $w={8} aria-label="下一关键帧">
              <svg width="8" height="13" fill="none" stroke="currentColor" strokeWidth="2"><path d="M1 1l5.500 5.500L1 12" /></svg>
            </IconButton>
            <Divider $tall={32} $margin="0 -7px 0 -5px" />
            <IconButton aria-label="绘图纸外观">
              <Icon><circle cx="5" cy="8" r="5" opacity=".55" /><circle cx="10.500" cy="8" r="5.500" /></Icon>
            </IconButton>
            <IconButton aria-label="编辑多个帧">
              <Icon><path opacity=".6" d="M0 2h4v12H0zM11 2h5v12h-5z" /><path fillRule="evenodd" d="M5 2h5v12H5zM6.500 10v2.500h2V10z" /></Icon>
            </IconButton>
            <IconButton $color="#4a4a4a" aria-label="创建传统补间">
              <Icon><path d="M1 6h5v8h5v1H1zM7 2h8v9H7z" /></Icon>
            </IconButton>
            <IconButton aria-label="插入关键帧">
              <Icon><path fillRule="evenodd" d="M1 3h14v10h-5V9h2V7H4v2h3v4H1z" /></Icon>
            </IconButton>
            <Divider $tall={32} $margin="0 -7px" />
            <IconButton aria-label="循环">
              <Icon><path d="M0 4h8V0l6 4.500L8 9V6H2v7h12V8h2v7H0z" /></Icon>
            </IconButton>
            <IconButton aria-label="后退一帧">
              <Icon><path d="M9 2v12L1 8zM11 2h3v12h-3z" /></Icon>
            </IconButton>
            <IconButton aria-label="播放">
              <Icon><path d="M2 2l13 6-13 6z" /></Icon>
            </IconButton>
            <IconButton aria-label="前进一帧">
              <Icon><path d="M7 2l8 6-8 6zM2 2h3v12H2z" /></Icon>
            </IconButton>
          </PlayButtons>
          <SizeSlider>
            <IconButton aria-label="重置">
              <Icon line="2"><path d="M2 6h8q4 0 4 6M5 2 1.500 6 5 9M0 14h16" /></Icon>
            </IconButton>
            <svg width="86" height="14" fill="none" stroke="#bdbdbd" strokeWidth="2">
              <path d="M0 7h21M37 7h53" />
              <circle cx="29" cy="7" r="5.500" />
            </svg>
            <IconButton aria-label="放大"><Icon><path d="M9 3l7 10H5zM5 5l1 2-3 6H0z" /></Icon></IconButton>
          </SizeSlider>
        </RightCell>

        <LeftCell $pad="0 13px 0 20px">
          <IconButton aria-label="新建图层">
            <svg width="13" height="13" fill="none" stroke="currentColor"><path d="M.5.500h12v12H.5zM6.500 3v7M3 6.500h7" /></svg>
          </IconButton>
          <IconButton $w={46} aria-label="新建文件夹"><FaFolder size={16} /></IconButton>
          <IconButton aria-label="删除"><FaTrashCan size={15} /></IconButton>
          <Push />
          <IconButton $w={22} aria-label="突出显示"><svg width="6" height="6" fill="currentColor"><circle cx="3" cy="3" r="2.500" /></svg></IconButton>
          <IconButton $w={22} aria-label="轮廓"><svg width="8" height="16" fill="none" stroke="currentColor" strokeWidth="2"><path d="M1 1h6v14H1z" /></svg></IconButton>
          <IconButton $w={30} aria-label="显示或隐藏">
            <Icon line="1.300"><path d="M.5 8Q8-.5 15.500 8 8 16.500.5 8zM1 1l14 14" /><circle cx="8" cy="8" r="2.500" /></Icon>
          </IconButton>
          <IconButton $w={22} aria-label="锁定">
            <Icon><path fillRule="evenodd" d="M2 7h12v9H2zM7 10h2v3.500H7z" /><path fill="none" stroke="currentColor" strokeWidth="1.800" d="M4 7V5q0-4 4-4t4 4v2" /></Icon>
          </IconButton>
        </LeftCell>
        <Ruler>
          <Seconds>
            {["1s", "2s", "3s", "4s"].map(s => <span key={s}>{s}</span>)}
          </Seconds>
          <Numbers>
            {numbers.map(n => <span key={n}>{n}</span>)}
          </Numbers>
          <Playhead />
        </Ruler>

        <LeftCell $pad="0 72px 0 29px" $selected>
          <svg width="11" height="12"><path d="M.5.500h10v10H5L.5 6z" fill="#5a5a5a" stroke="#c8c8c8" /><path d="M.5 6H5v4.500" fill="none" stroke="#c8c8c8" /></svg>
          <LayerName>图层_1</LayerName>
          <LayerColor />
        </LeftCell>
        <Frames>
          <Tween>
            <svg width="539" height="18" fill="#262626">
              <circle cx="6" cy="11" r="3" />
              <path d="M15 10.500h515v1H15zM530 8l7 3-7 3z" />
            </svg>
          </Tween>
          <LastFrame>
            <svg width="11" height="18"><circle cx="5.500" cy="11" r="3" fill="#222" /></svg>
          </LastFrame>
          <PlayheadTrail $soft />
        </Frames>

        <LeftCell />
        <RightCell>
          <PlayheadTrail />
        </RightCell>
        <LeftCell />
        <RightCell>
          <TimeScroll />
        </RightCell>
        <Gutter />
      </Timeline>
    </>
  )
}

function Arrow({ from: [x1, y1, x2, y2] }) {
  const len = Math.hypot(x2 - x1, y2 - y1)
  const ux = (x2 - x1) / len
  const uy = (y2 - y1) / len
  const at = (back, side) => `${x2 - ux * back - uy * side},${y2 - uy * back + ux * side}`
  return (
    <g>
      <line x1={x1} y1={y1} x2={x2 - ux * 18} y2={y2 - uy * 18} stroke="#f00" strokeWidth="2.800" strokeLinecap="round" />
      <polygon points={`${at(0, 0)} ${at(27, 7)} ${at(20, 0)} ${at(27, -7)}`} fill="#f00" />
    </g>
  )
}

function ContextList() {
  return (
    <ContextMenu>
      {contextItems.map((item, i) =>
        item ? (
          <li key={i}>
            <ContextButton $hot={item.hot} disabled={item.off}>
              {item.text}
              {item.key && <kbd>{item.key}</kbd>}
              {item.sub && <svg width="6" height="9" fill="none" stroke="#222" strokeWidth="1.200"><path d="M1 .8 4.800 4.500 1 8.200" /></svg>}
            </ContextButton>
          </li>
        ) : (
          <ContextLine key={i} />
        )
      )}
    </ContextMenu>
  )
}

function ImeBar() {
  return (
    <InputBar>
      <svg width="218" height="26" fill="none" stroke="#3b8fd4" strokeWidth="2">
        <rect x="-6" y="-1" width="27" height="27" rx="5" fill="#ff5a28" stroke="none" transform="rotate(-10 8 13)" />
        <path d="M16 7Q0 4 1 10t11 4-13 6" stroke="#fff" strokeWidth="4" />
        <path d="M31 8h12v7H31zM37 4v16" />
        <circle cx="57" cy="9" r="2" fill="#3b8fd4" stroke="none" />
        <path d="M64 13q2 3-1 6" />
        <rect x="82" y="5" width="5" height="9" rx="2.500" fill="#3b8fd4" />
        <path d="M79 11q0 6 5.500 6t5.500-6M84.500 17v4" />
        <rect x="103" y="8" width="13" height="10" rx="1" />
        <path d="M105 11h9M105 14h9" strokeDasharray="2 1" />
        <path fill="#3b8fd4" d="M128 7h4l2 2 2-2h4l2 4-4 2v7h-8v-7l-3-2z" />
        <rect x="150" y="10" width="14" height="8" rx="4" fill="#3b8fd4" />
        <path d="M157 5v4M155 13h1M159 13h1" />
        <path fill="#3b8fd4" d="M177 7h3v3h-3zM184 7h2v3h-2zM177 16h3v3h-3zM184 16h3v3h-3z" />
        <circle cx="205" cy="13" r="5" strokeDasharray="4 2" strokeWidth="3" />
      </svg>
    </InputBar>
  )
}

function TagLogo() {
  return (
    <TagMark>
      <TagSvg>
        <path d="M443 0H612Q662 10 662 60V102Q662 152 612 162H443Q393 152 393 102V60Q393 10 443 0Z" fill="#0065ff" />
        <text x="17" y="72" fontFamily="Noto Sans CJK SC, sans-serif" fontWeight="900" fontSize="70" fill="#e80808" stroke="#fff" strokeOpacity=".5" strokeWidth="3" paintOrder="stroke">电脑技术网</text>
        <text x="17" y="143" fontFamily="Liberation Serif, serif" fontSize="54" fill="#0058e6" stroke="#0058e6" strokeWidth="1.500">www.tagxp.com</text>
        <text x="405" y="124" fontFamily="Noto Sans CJK SC, sans-serif" fontWeight="700" fontSize="129" fill="#fff">TAG</text>
      </TagSvg>
    </TagMark>
  )
}

function App() {
  return (
    <>
      <GlobalStyle />
      <Page>
        <TitleBar>
          <AppName>Animate</AppName>
          <Divider $margin="9px 0 0 13px" />
          <MenuBar>
            {menus.map(name => (
              <MenuButton key={name}>{name}</MenuButton>
            ))}
          </MenuBar>
          <Divider $margin="9px 0 0" />
          <TitleTools>
            <IconButton aria-label="共享">
              <Icon line="2"><path d="M4 6H1v9h14V6h-3M8 11V2M4.500 5 8 1.500 11.500 5" /></Icon>
            </IconButton>
            <IconButton $w={32} aria-label="工作区">
              <Icon line="1.500"><path d="M1 2h14v12H1zM3 5h2M3 8h2M3 11h2" /></Icon>
            </IconButton>
            <Divider $tall={24} $margin="0 0 0 -8px" />
            <IconButton aria-label="测试影片">
              <Icon><path fillRule="evenodd" d="M8 0a8 8 0 1 1 0 16A8 8 0 0 1 8 0zM5.500 4v8L12 8z" /></Icon>
            </IconButton>
          </TitleTools>
          <WindowButtons>
            <IconButton aria-label="最小化"><svg width="10" height="10" fill="#aaa"><path d="M0 7h10v3H0z" /></svg></IconButton>
            <IconButton aria-label="还原"><svg width="12" height="11" fill="none" stroke="#aaa" strokeWidth="2"><path d="M1 5h5v5H1zM5 5V1h6v5H6" /></svg></IconButton>
            <IconButton aria-label="关闭"><svg width="11" height="9" stroke="#aaa" strokeWidth="2"><path d="M1 0l9 9M10 0 1 9" /></svg></IconButton>
          </WindowButtons>
        </TitleBar>
        <Toolbox />
        <Center>
          <DocTabs>
            <DocTab>
              无标题-3*
              <svg width="7" height="7" stroke="#bbb"><path d="M.5.500l6 6M6.500.500l-6 6" /></svg>
            </DocTab>
          </DocTabs>
          <SceneBar>
            <BsSuitClubFill size={17} color="#bdbdbd" />
            <Divider $tall={23} $margin="0 21px 0 15px" />
            <SceneName>
              场景 1
              <Chevron />
            </SceneName>
            <SceneTools>
              <IconButton aria-label="舞台居中"><Icon line="1"><path d="M4 4h8v8H4zM8 1v14M1 8h14" /></Icon></IconButton>
              <IconButton aria-label="旋转工具">
                <svg width="17" height="16" viewBox="0 0 17 16" fill="currentColor">
                  <path d="M2 7l2 2V4h1.200v4L5.500 2.500h1.200V8L7.500 3h1.200v5.500L10 5l1 .5-1 7-2 3H5.500L1 8z" />
                  <path d="M1 4Q2 1 5 1M9 4l3 0 4 5-4 5h-2l3.500-5-3-4" fill="none" stroke="currentColor" />
                </svg>
              </IconButton>
              <IconButton aria-label="剪切舞台外内容"><Icon line="1"><path opacity=".5" strokeWidth="3" strokeDasharray="1 1" d="M2 2h12v12H2z" /><path strokeWidth="1.500" d="M4 3.500h8v9H4z" /></Icon></IconButton>
              <ZoomBox>
                <svg width="9" height="18" fill="none" stroke="#bdbdbd" strokeWidth="1.300"><path d="M.5 4.500 4.500 1l4 3.500M.5 13.500l4 3.500 4-3.500" /></svg>
                <input aria-label="缩放比例" defaultValue="100%" />
                <Chevron size={9} width={1.5} />
              </ZoomBox>
            </SceneTools>
          </SceneBar>
          <Canvas>
            <Stage />
            <StageScrollX />
            <StageScrollY />
          </Canvas>
          <TimelinePanel />
        </Center>
        <Properties />
        <Floating>
          <FloatingHead>
            <DoubleArrow />
            <svg width="7" height="7" stroke="#bbb" strokeWidth="2"><path d="M.5.500l6 6M6.500.500l-6 6" /></svg>
          </FloatingHead>
          <Gripper />
          <FloatingBody>
            <IconButton aria-label="变形"><FrameIcon /></IconButton>
          </FloatingBody>
        </Floating>
        <ContextList />
        <Cursor width="14" height="21" viewBox="0 0 14 21">
          <path d="M.7.800v15.500l3.600-3.400 2.500 6 2.500-1-2.500-5.800h5z" fill="#fff" stroke="#1a1a2a" />
        </Cursor>
        <Annotations>
          {arrows.map(points => (
            <Arrow key={points.join()} from={points} />
          ))}
        </Annotations>
        <ImeBar />
        <TagLogo />
        <SiteMark>
          <svg width="44" height="42" viewBox="0 0 44 42">
            <path d="M1 32Q-2 16 14 7 28 0 44 1 26 4 18 12 8 20 12 28 3 28 1 32z" fill="#1f6a9c" />
            <path d="M10 20Q14 10 26 10 16 16 16 22q2 6 10 0Q22 32 14 30 9 28 10 20z" fill="#2d5f9a" />
            <path d="M40 12Q46 28 30 36 20 40 6 40 22 34 28 26 32 18 40 12z" fill="#2c8036" />
            <path d="M4 40Q20 36 28 28 26 38 4 40z" fill="#a9a02c" />
          </svg>
          <SiteText>
            极光下载站
            <a href="#xz7">www.xz7.com</a>
          </SiteText>
        </SiteMark>
      </Page>
    </>
  )
}

export default App
